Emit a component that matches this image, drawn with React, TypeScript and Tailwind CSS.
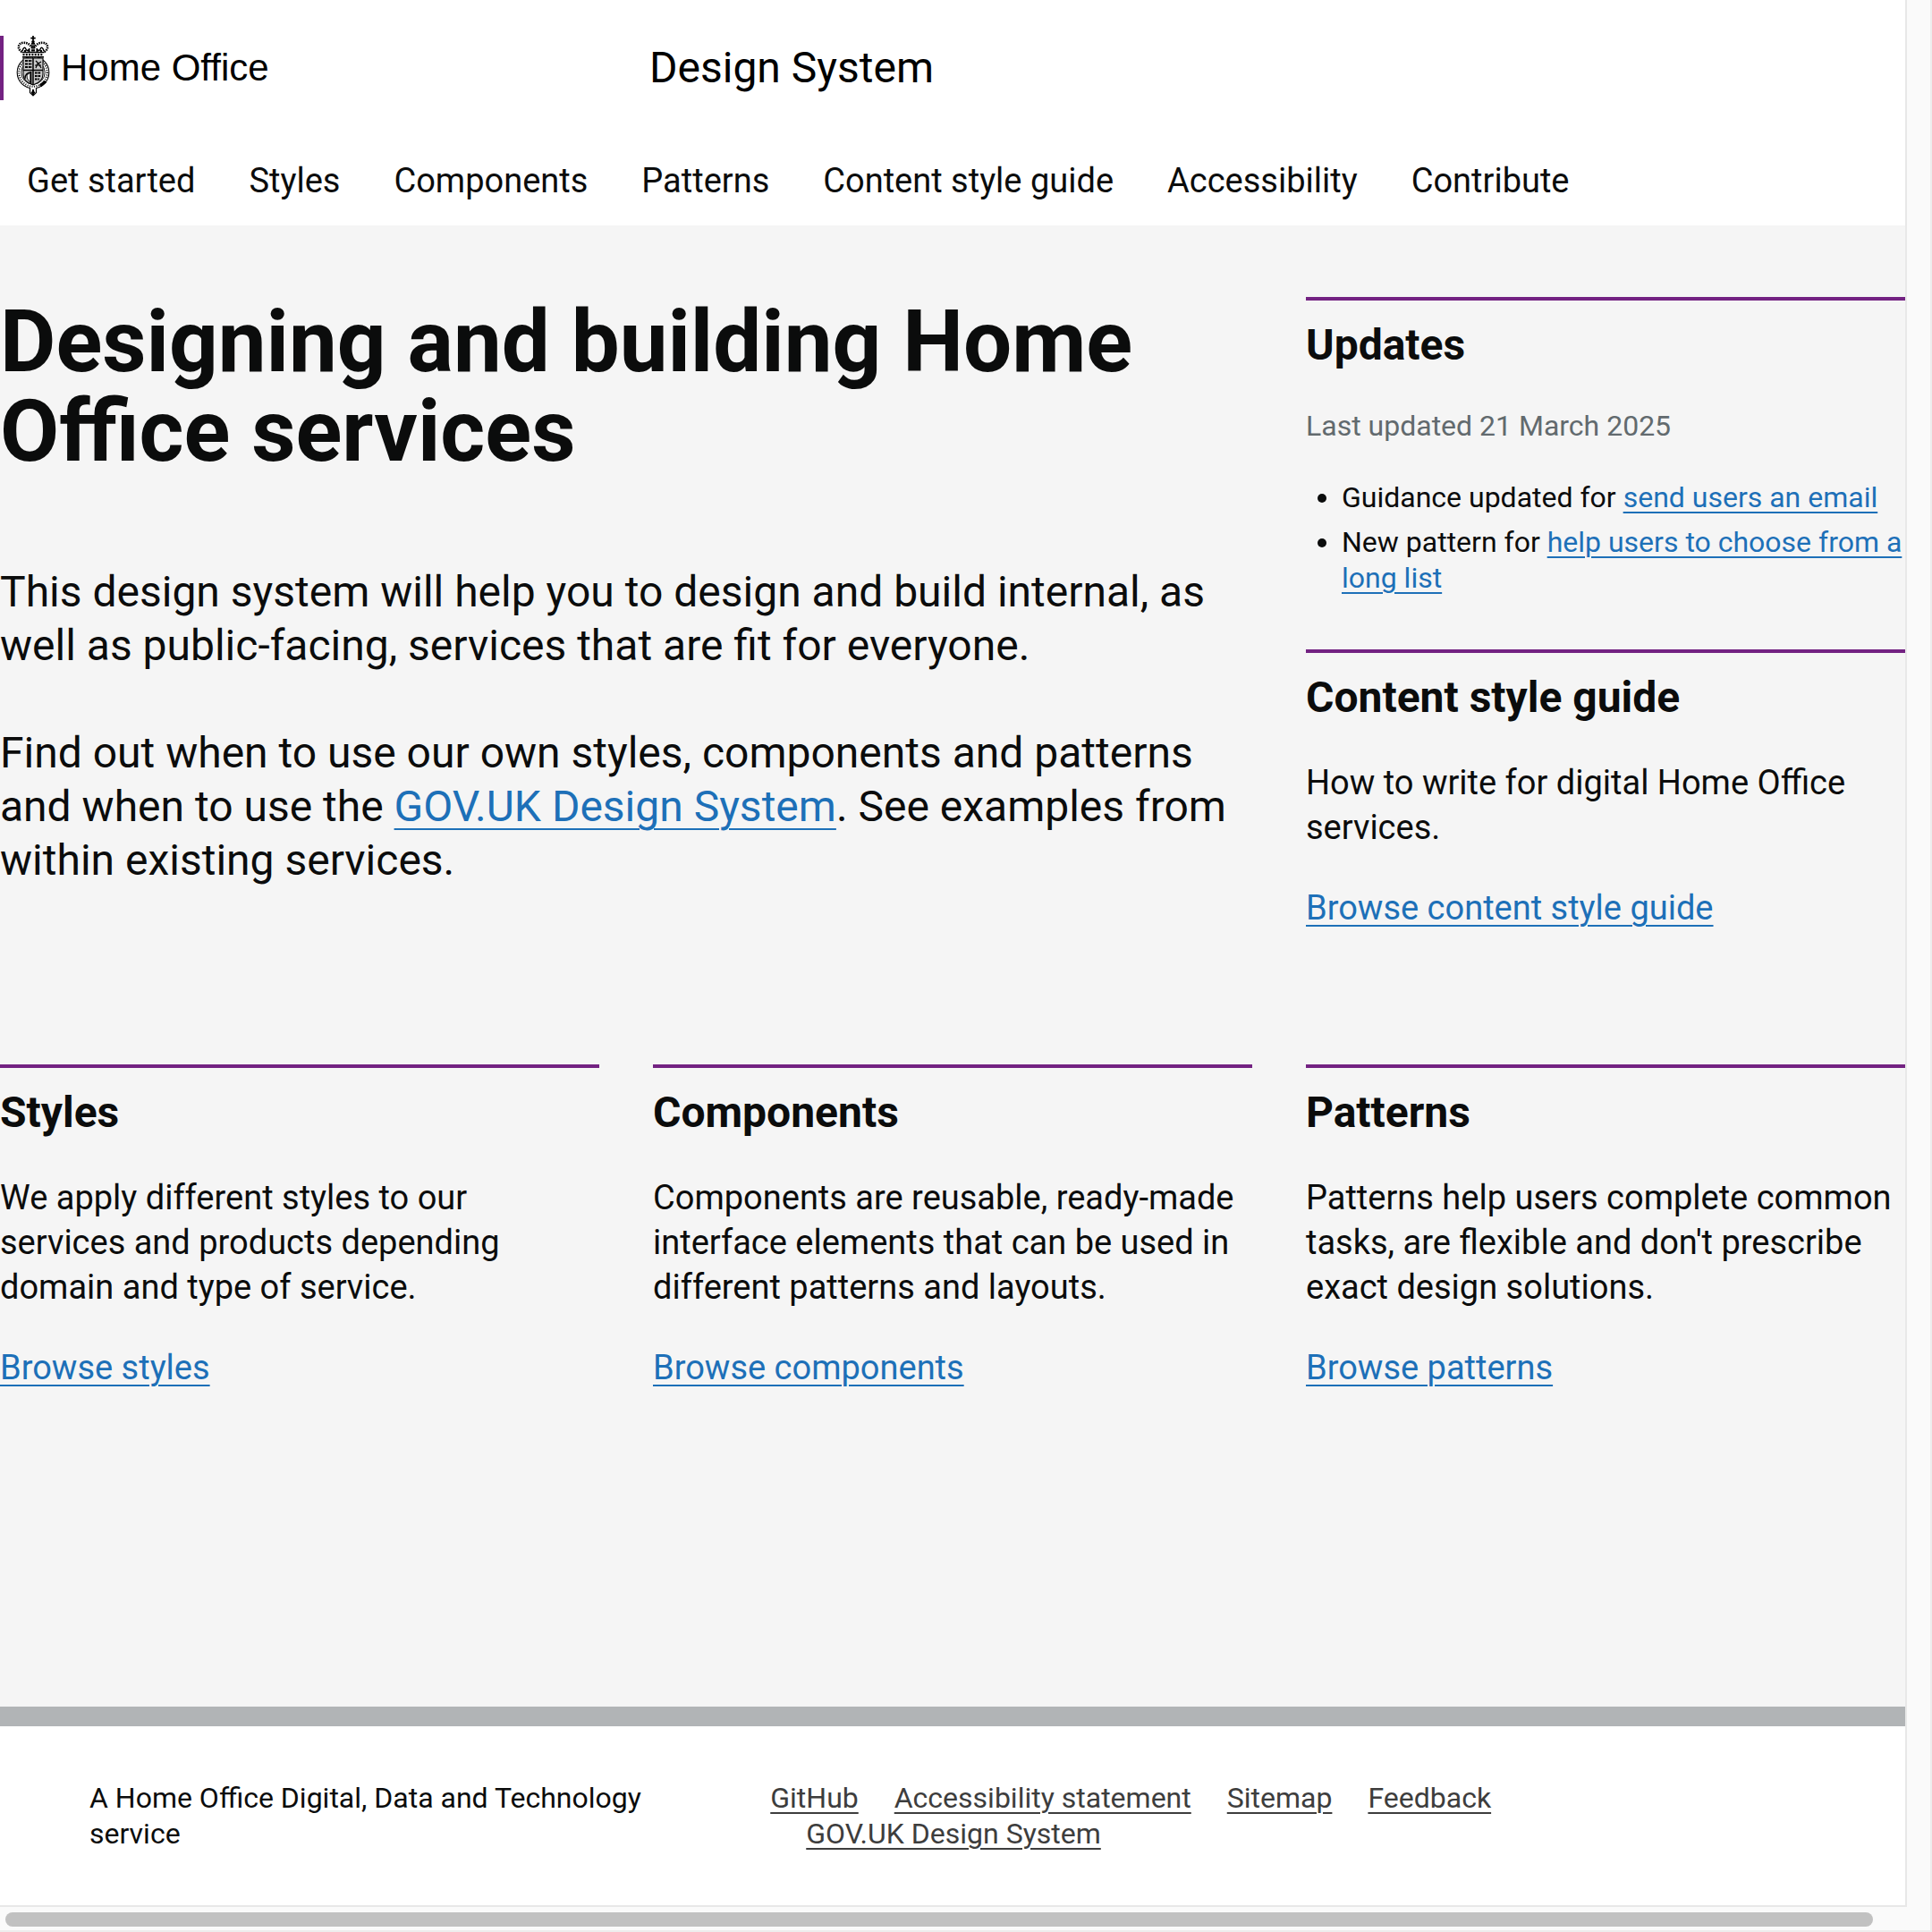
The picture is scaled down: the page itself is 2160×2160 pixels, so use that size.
import type { ReactNode } from "react";

const navItems = ["Get started", "Styles", "Components", "Patterns", "Content style guide", "Accessibility", "Contribute"];
const footerLinks = ["GitHub", "Accessibility statement", "Sitemap", "Feedback", "GOV.UK Design System"];
const topics = [
  { title: "Styles", text: "We apply different styles to our services and products depending domain and type of service.", link: "Browse styles" },
  { title: "Components", text: "Components are reusable, ready-made interface elements that can be used in different patterns and layouts.", link: "Browse components" },
  { title: "Patterns", text: "Patterns help users complete common tasks, are flexible and don't prescribe exact design solutions.", link: "Browse patterns" },
];

function TextLink({ children }: { children: ReactNode }) {
  return (
    <a href="#" className="text-[#1d70b8] underline decoration-2 underline-offset-[0.1578em]">
      {children}
    </a>
  );
}

function Panel({ title, children, className = "" }: { title: string; children: ReactNode; className?: string }) {
  return (
    <section className={`border-t-4 border-[#732282] pt-5 ${className}`}>
      <h2 className="mb-10 text-[48px] leading-[60px] font-bold">{title}</h2>
      {children}
    </section>
  );
}

function Crest() {
  return (
    <svg viewBox="0 0 38 68" className="h-[68px] w-[38px] shrink-0" fill="none" stroke="#000" strokeWidth="1" aria-hidden="true">
      {/* garter, buckle and shield */}
      <circle cx="19" cy="41" r="17.800" fill="#fff" strokeWidth="1.100" />
      <circle cx="19" cy="41" r="15.700" strokeWidth="2" strokeDasharray="1 1.500" />
      <circle cx="19" cy="41" r="13.200" strokeWidth="0.900" />
      <path d="M8 25h22v18c0 7-5 10-11 12C13 53 8 50 8 43z" fill="#c9c9c9" strokeWidth="1.100" />
      <path d="M19 25v30M8 38.500h22" strokeWidth="1.500" />
      <path d="M10 28h8M10 31.500h8M10 35h8" strokeWidth="1.900" strokeDasharray="3 0.800" />
      <path d="M22 28l3 3 3-2M24 31l-2 5M25 31l3 5M21 33h7" strokeWidth="1.200" />
      <path d="M10 48c0-5 3-7 7-7" strokeWidth="1.300" />
      <path d="M12 44l4-3v11c-2-1-4-4-4-8z" fill="#fff" strokeWidth="0.900" />
      <path d="M16.500 40v14" strokeWidth="1.800" />
      <path d="M21 41.500h7M21 45h7M21 48.500h5" strokeWidth="1.900" strokeDasharray="2.600 0.800" />
      <path d="M27 56l6-5" strokeWidth="3.400" />
      <path d="M15.500 58v5.500l3.500 3.500 3.500-3.500V58" fill="#fff" strokeWidth="1.200" />
      <path d="M19 60v6M17 63.500h4" strokeWidth="2.200" />
      {/* crown */}
      <path d="M6.500 24L6 18C1 15 2 8 8 7.500c5-.3 8 2 11 5 3-3 6-5.300 11-5 6 .5 7 7.500 2 10.500l-.5 6z" fill="#fff" stroke="none" />
      <path d="M6.500 18C1 15 2 8 8 7.800c4.500-.2 8 2.200 9.500 5.500" strokeWidth="2.600" strokeDasharray="1.500 1" />
      <path d="M31.500 18C37 15 36 8 30 7.800c-4.500-.2-8 2.200-9.500 5.500" strokeWidth="2.600" strokeDasharray="1.500 1" />
      <path d="M19 8v10" strokeWidth="4" strokeDasharray="1.800 0.600" />
      <path d="M7 17c1-4 3-5 4-2 1 2.500 3 2 4-1M31 17c-1-4-3-5-4-2-1 2.500-3 2-4-1" strokeWidth="1.500" />
      <path d="M10 16v3M28 16v3M14.500 15v4M23.500 15v4" strokeWidth="2" />
      <path d="M6.500 18.500h25M7 23.800h24" strokeWidth="1.500" />
      <path d="M7.500 21.200h23" strokeWidth="2.200" strokeDasharray="2 1.300" />
      <path d="M19 0v5.500M16.300 2.700h5.400" strokeWidth="1.700" />
      <circle cx="19" cy="6.800" r="1.800" fill="#000" stroke="none" />
    </svg>
  );
}

export default function App() {
  return (
    <div className="flex min-h-screen flex-col border-r-2 border-[#ededed] bg-[#fafafa] font-['Roboto',sans-serif] text-[#0b0c0c]">
      <div className="mr-[26px] flex grow flex-col border-r-2 border-[#e8e8e8] bg-white">
        <header>
          <div className="grid h-[152px] grid-cols-3 items-center gap-x-[60px] text-black">
            <a href="#" className="flex h-[72px] items-start border-l-4 border-[#732282] pl-[14px]">
              <Crest />
              <span className="ml-3 font-['Liberation_Sans',sans-serif] text-[42px] leading-[72px]">Home Office</span>
            </a>
            <a href="#" className="-ml-1 text-[48px] leading-[60px]">Design System</a>
          </div>
          <nav className="flex flex-wrap gap-x-[60px] px-[30px] pt-[25px] pb-[25px] text-[38px] leading-[50px]">
            {navItems.map((item) => (
              <a key={item} href="#">{item}</a>
            ))}
          </nav>
        </header>

        <main className="grow bg-[#f5f5f5] pt-20 pb-[100px]">
          <div className="grid grid-cols-3 gap-x-[60px]">
            <div className="col-span-2">
              <h1 className="mb-[100px] text-[96px] leading-[100px] font-bold">Designing and building Home Office services</h1>
              <div className="space-y-[60px] text-[48px] leading-[60px]">
                <p>This design system will help you to design and build internal, as well as public-facing, services that are fit for everyone.</p>
                <p>
                  Find out when to use our own styles, components and patterns and when to use the <TextLink>GOV.UK Design System</TextLink>. See examples from within existing services.
                </p>
              </div>
            </div>
            <div>
              <Panel title="Updates" className="mb-[60px]">
                <div className="text-[32px] leading-[40px]">
                  <p className="mb-10 text-[#626a6e]">Last updated 21 March 2025</p>
                  <ul className="list-disc space-y-[10px] pl-10">
                    <li>Guidance updated for <TextLink>send users an email</TextLink></li>
                    <li>New pattern for <TextLink>help users to choose from a long list</TextLink></li>
                  </ul>
                </div>
              </Panel>
              <Panel title="Content style guide" className="mb-[150px]">
                <div className="space-y-10 text-[38px] leading-[50px]">
                  <p>How to write for digital Home Office services.</p>
                  <p><TextLink>Browse content style guide</TextLink></p>
                </div>
              </Panel>
            </div>
          </div>
          <div className="grid grid-cols-3 gap-x-[60px]">
            {topics.map((topic) => (
              <Panel key={topic.title} title={topic.title}>
                <div className="space-y-10 text-[38px] leading-[50px]">
                  <p>{topic.text}</p>
                  <p><TextLink>{topic.link}</TextLink></p>
                </div>
              </Panel>
            ))}
          </div>
        </main>

        <footer className="grid grid-cols-[3fr_5fr] gap-x-[60px] border-t-[22px] border-[#b1b4b6] px-[100px] py-[60px] text-[32px] leading-[40px]">
          <p>A Home Office Digital, Data and Technology service</p>
          <ul className="flex flex-wrap">
            {footerLinks.map((label) => (
              <li key={label} className="ml-10 first:ml-0">
                <a href="#" className="text-[#3d3d3d] underline decoration-2 underline-offset-[0.1578em]">{label}</a>
              </li>
            ))}
          </ul>
        </footer>
      </div>
      <div className="flex h-[30px] flex-col">
        <div className="mr-[26px] h-[2px] bg-[#e8e8e8]" />
        <div className="mt-[6px] mr-[64px] ml-[6px] h-4 rounded-full bg-[#c1c1c1]" />
        <div className="mt-auto h-[2px] bg-[#ededed]" />
      </div>
    </div>
  );
}
